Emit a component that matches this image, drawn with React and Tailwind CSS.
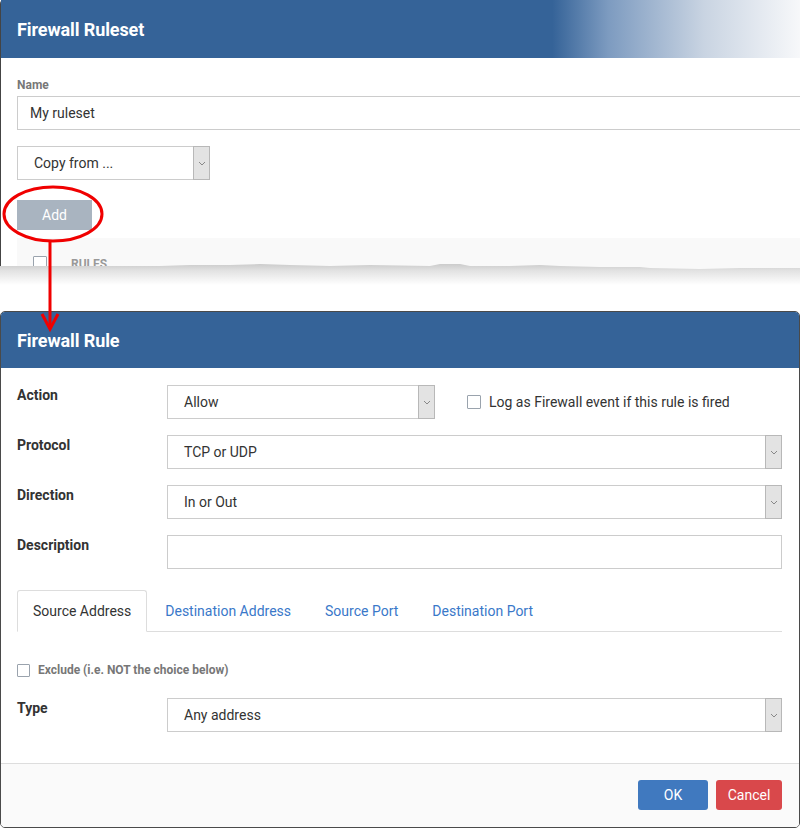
import React from "react";

const Chevron = () => (
  <svg width="8" height="5" viewBox="0 0 8 5" fill="none">
    <path d="M1 1l3 3 3-3" stroke="#888" strokeWidth="1" />
  </svg>
);

// select box with grey arrow button on the right
const Select = ({ value, className = "" }) => (
  <div className={`flex h-[34px] border border-[#ccc] bg-white ${className}`}>
    <span className="flex-1 pl-4 text-sm leading-[32px] text-[#333]">{value}</span>
    <div className="flex w-[17px] items-center justify-center border border-[#b8b8b8] bg-[#e3e3e3] -my-px -mr-px">
      <Chevron />
    </div>
  </div>
);

const Checkbox = ({ size = "w-[14px] h-[14px]" }) => (
  <span className={`inline-block ${size} border border-[#9aa3ad] bg-white rounded-[1px]`} />
);

const Row = ({ label, children }) => (
  <div className="flex items-start">
    <div className="w-[150px] text-sm font-bold text-[#333]">{label}</div>
    <div className="flex-1">{children}</div>
  </div>
);

export default function App() {
  return (
    <div className="relative h-[828px] w-[800px] overflow-hidden bg-white font-['Roboto',sans-serif]">
      {/* Background dialog: Firewall Ruleset */}
      <div className="relative h-[311px] overflow-hidden">
        <div className="h-[268px] rounded-tl-[4px] border-l border-[#444]">
          <div className="flex h-[58px] items-center bg-[linear-gradient(to_right,#356398_69%,#7d9bc0_76%,#c9d4e2_88%,#f7f8fa_100%)] pl-4">
            <h1 className="text-[18px] font-bold tracking-[-0.1px] text-white">Firewall Ruleset</h1>
          </div>
          <div className="pl-4 pt-[19px]">
            <div className="text-xs font-bold text-[#777]">Name</div>
            <div className="mt-[3px] h-[34px] border border-r-0 border-[#ccc] pl-3 text-sm leading-[32px] text-[#333]">
              My ruleset
            </div>
            <Select value="Copy from ..." className="mt-4 w-[193px]" />
            <button className="mt-5 h-[30px] w-[75px] bg-[#a9b4c0] text-sm text-white">Add</button>
            <div className="mt-2 flex h-[40px] items-start gap-[24px] bg-[#f9f9f9] pl-4 pt-[18px]">
              <Checkbox size="w-[14px] h-[14px]" />
              <span className="text-xs font-bold text-[#999]">RULES</span>
            </div>
          </div>
        </div>
        {/* torn paper edge */}
        <svg className="absolute left-0 top-[255px]" width="800" height="56" viewBox="0 0 800 56">
          <defs>
            <linearGradient id="tear" x1="0" y1="8" x2="0" y2="30" gradientUnits="userSpaceOnUse">
              <stop offset="0" stopColor="#c8c8c8" />
              <stop offset="0.35" stopColor="#e2e2e2" />
              <stop offset="1" stopColor="#ffffff" />
            </linearGradient>
          </defs>
          <path
            d="M0 11 L160 11 L190 10 L230 10 L260 9 L290 10 L330 11 L370 10 L430 11 L440 9 L460 9 L470 11 L510 11 L540 10 L560 11 L600 12 L640 12 L650 13 L700 14 L740 13 L800 13 L800 56 L0 56 Z"
            fill="url(#tear)"
          />
        </svg>
      </div>

      {/* Foreground dialog: Firewall Rule */}
      <div className="flex h-[517px] flex-col overflow-hidden rounded-[5px] border border-[#4a4a4a] bg-white">
        <div className="flex h-[56px] items-center bg-[#356398] pl-4">
          <h2 className="text-[18px] font-bold tracking-[-0.1px] text-white">Firewall Rule</h2>
        </div>
        <div className="flex flex-1 flex-col pl-4 pr-[17px] pt-[17px]">
          <div className="flex flex-col gap-4">
            <Row label="Action">
              <div className="flex items-center">
                <Select value="Allow" className="w-[268px]" />
                <label className="ml-[32px] flex items-center gap-2 text-sm text-[#333]">
                  <Checkbox />
                  Log as Firewall event if this rule is fired
                </label>
              </div>
            </Row>
            <Row label="Protocol">
              <Select value="TCP or UDP" />
            </Row>
            <Row label="Direction">
              <Select value="In or Out" />
            </Row>
            <Row label="Description">
              <div className="h-[34px] border border-[#ccc] bg-white" />
            </Row>
          </div>

          <div className="mt-[21px] flex h-[42px] border-b border-[#ddd] text-sm">
            <div className="-mb-px flex items-center rounded-t-[3px] border border-b-white border-[#ddd] bg-white px-[15px] text-[#333]">
              Source Address
            </div>
            <div className="ml-[2px] flex items-center px-4 text-[#3a78c9]">Destination Address</div>
            <div className="ml-[2px] flex items-center px-4 text-[#3a78c9]">Source Port</div>
            <div className="ml-[2px] flex items-center px-4 text-[#3a78c9]">Destination Port</div>
          </div>

          <label className="mt-[30px] flex items-center gap-2 text-xs font-bold text-[#777]">
            <Checkbox size="w-[13px] h-[13px]" />
            Exclude (i.e. NOT the choice below)
          </label>

          <div className="mt-5">
            <Row label="Type">
              <Select value="Any address" />
            </Row>
          </div>
        </div>
        <div className="flex h-[64px] justify-end gap-2 border-t border-[#ddd] bg-[#fafafa] pr-[17px] pt-4">
          <button className="h-[30px] w-[70px] rounded-[3px] bg-[#4079bf] text-sm text-white">OK</button>
          <button className="h-[30px] w-[66px] rounded-[3px] bg-[#d9484b] text-sm text-white">Cancel</button>
        </div>
      </div>

      {/* callout: red ellipse and arrow */}
      <svg className="pointer-events-none absolute left-0 top-0" width="800" height="828" viewBox="0 0 800 828">
        <ellipse cx="53" cy="214" rx="49" ry="27" fill="none" stroke="#f00000" strokeWidth="3" />
        <path d="M50 241 L50 329" stroke="#f00000" strokeWidth="3" />
        <path d="M42 314 L50 329 L58 314" fill="none" stroke="#f00000" strokeWidth="3" />
      </svg>
    </div>
  );
}
